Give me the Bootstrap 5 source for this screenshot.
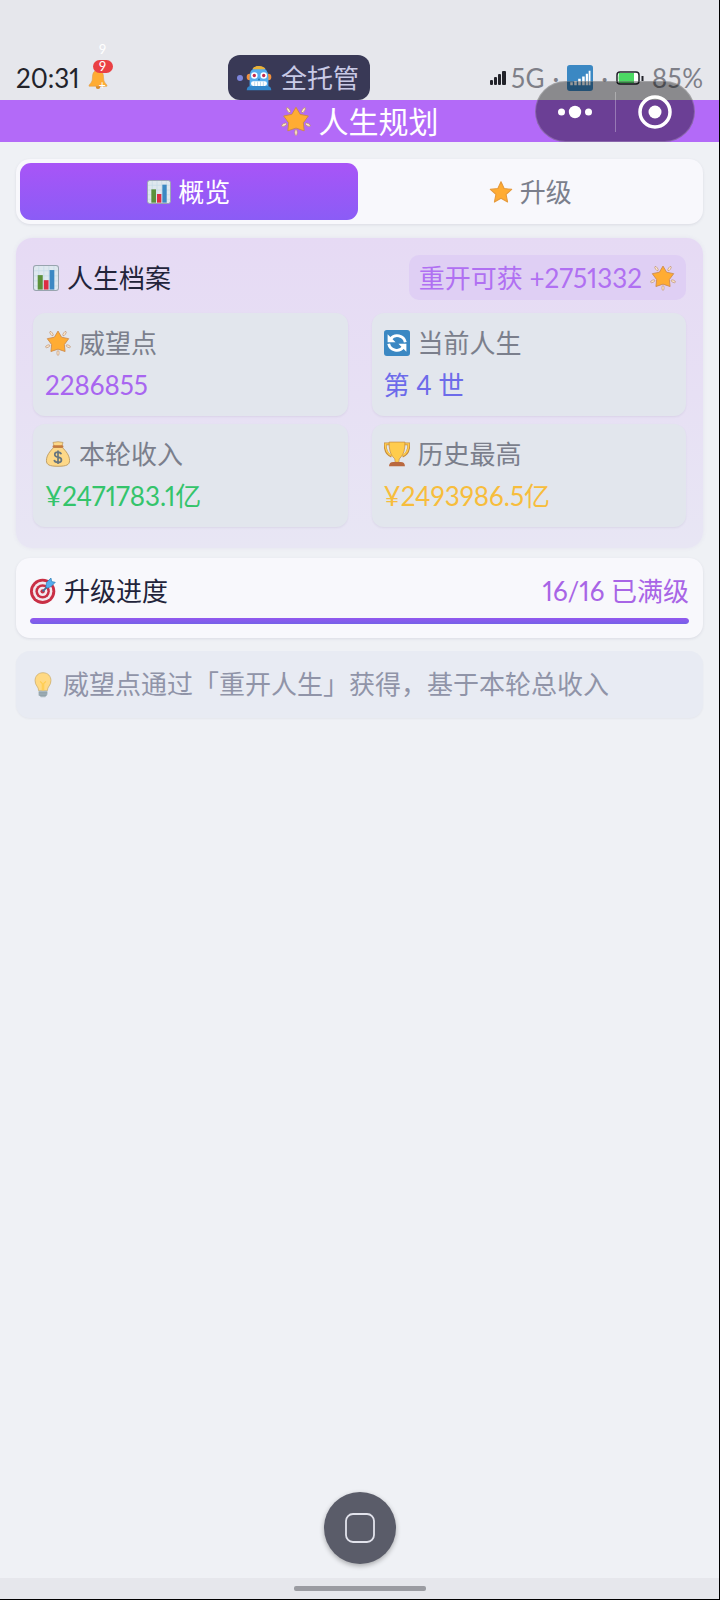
<!DOCTYPE html>
<html lang="zh-CN">
<head>
<meta charset="utf-8">
<meta name="viewport" content="width=device-width, initial-scale=1">
<title>人生规划</title>
<link href="https://cdn.jsdelivr.net/npm/bootstrap@5.3.0/dist/css/bootstrap.min.css" rel="stylesheet">
<style>
:root{--violet:#a855f7;--ink:#22243a;--muted:#7b7f8c}
body{font-family:Lato,"Noto Sans CJK SC",sans-serif;font-size:26px;line-height:38px;color:var(--ink);background:#eff1f5}
.screen{border-right:1px solid #000;border-bottom:1px solid #000}
.emo{width:26px;height:26px;flex:none;display:block}
.emo-sm{width:24px;height:24px}
.emo-lg{width:30px;height:30px}
.status{background:#e6e7ec;padding:55px 16px 0;height:100px}
.clock{color:#22232a}
.figures{font-variant-numeric:proportional-nums}
.bell{position:relative;width:20px;height:26px}
.bell svg{display:block;width:20px;height:20px;margin-top:4px}
.bell-count,.bell-ghost{position:absolute;left:5px;width:20px;height:13px;border-radius:7px;color:#fff;font-size:13px;line-height:13px;text-align:center}
.bell-count{background:#ea4044;top:-5px}
.bell-ghost{top:-22px}
.bell-plus{position:absolute;left:11px;top:14px;font-size:12px;line-height:12px;color:#fff}
.auto-pill{background:#393956;color:#c9cae6;border-radius:12px;height:45px;padding:0 11px 0 9px;gap:3px;border:0}
.auto-pill .tick{width:6px;height:6px;border-radius:50%;background:#7d86dd}
.auto-pill .emo{margin-right:6px}
.signals{color:#7e7f88}
.titlebar{background:#b36af8;color:#fff;height:42px;font-size:30px;line-height:42px}
.capsule{position:absolute;right:24px;top:81px;width:160px;height:61px;border-radius:31px;background:rgba(0,0,0,.4);border:1px solid rgba(255,255,255,.2)}
.capsule button{background:none;border:0;padding:0;flex:1}
.capsule svg{display:block;margin:0 auto}
.capsule .rule{width:1px;height:40px;background:rgba(255,255,255,.3)}
main{padding:17px 16px 0}
.tabs{background:#f8f8fc;border-radius:14px;padding:4px;gap:4px;height:65px;box-shadow:0 1px 3px rgba(40,40,80,.1)}
.tabs button{border:0;background:none;border-radius:11px;color:var(--muted);gap:7px}
.tabs button.active{background:linear-gradient(#a855f7,#8b5cf6);color:#fff}
.profile{margin-top:14px;border-radius:16px;padding:17px 17px 21px;background:linear-gradient(#e6daf4,#e8e6f4);box-shadow:0 0 4px rgba(120,90,180,.08)}
.profile h2,.progress-card h2{font-size:26px;line-height:38px;font-weight:400}
.gain{background:#dfcff4;color:#b070f2;border-radius:10px;height:45px;padding:0 10px;gap:8px}
.stats{display:grid;grid-template-columns:1fr 1fr;gap:8px 24px;margin-top:13px}
.stat{background:#e2e6ed;border-radius:12px;padding:9px 12px 10px;line-height:42px;box-shadow:0 1px 2px rgba(60,50,100,.08)}
.stat dt{font-weight:400;color:var(--muted)}
.progress-card{background:#f8f8fc;border-radius:14px;margin-top:10px;padding:14px;box-shadow:0 1px 3px rgba(40,40,80,.1)}
.meter{height:6px;border-radius:3px;margin-top:8px;background:#e2e6ed}
.meter .progress-bar{background:linear-gradient(#9358ef,#7561e8);border-radius:3px}
.points{color:#a865f0}
.life{color:#6d6bea}
.income{color:#34c46b}
.record{color:#f7bd3c}
.level{color:#a865e6}
.tip{background:#e8ebf3;color:#9094a8;border-radius:14px;margin-top:13px;padding:14px;line-height:39px;gap:7px;box-shadow:0 1px 2px rgba(40,40,80,.05)}
.home{width:72px;height:72px;border-radius:50%;border:0;background:#5a5c69;box-shadow:0 2px 5px rgba(0,0,0,.3);margin-bottom:14px}
.navstrip{background:#e6e7ec;height:21px}
.navstrip span{width:132px;height:5px;border-radius:2px;background:#9b9ca2}
</style>
</head>
<body>
<svg width="0" height="0" class="position-absolute" aria-hidden="true">
<defs>
<symbol id="star" viewBox="0 0 36 36"><path d="M18 2.5l4.700 10.300 11.300 1.300-8.400 7.600 2.300 11.400L18 27.400l-9.900 5.700 2.300-11.400L2 14.100l11.300-1.300z" fill="#ffac33" stroke="#e59a3c" stroke-width="1.600" stroke-linejoin="round"/></symbol>
<symbol id="glow" viewBox="0 0 36 36">
<g fill="#ffe9cc" stroke="#b98a68" stroke-width=".8"><ellipse cx="9" cy="5" rx="1.500" ry="3.500" transform="rotate(-35 9 5)"/><ellipse cx="27" cy="5" rx="1.500" ry="3.500" transform="rotate(35 27 5)"/><ellipse cx="3.800" cy="22.500" rx="1.500" ry="3.200" transform="rotate(65 3.800 22.500)"/><ellipse cx="32.200" cy="22.500" rx="1.500" ry="3.200" transform="rotate(-65 32.200 22.500)"/><ellipse cx="18" cy="31.800" rx="1.500" ry="3.500"/></g>
<path d="M18 1.500l5 8.500 9.800 2-6 8.200 1 9.600-9.800-3.300-9.800 3.300 1-9.600-6-8.200 9.800-2z" fill="#ffac33" stroke="#cc8a4c" stroke-width="1.200" stroke-linejoin="round"/></symbol>
<symbol id="chart" viewBox="0 0 36 36"><rect x=".7" y=".7" width="34.600" height="34.600" rx="3.500" fill="#dfe8ef" stroke="#98a4ae" stroke-width="1.400"/><path d="M1.500 8h33M1.500 15h33M1.500 22h33M1.500 29h33M8 1.500v33M15 1.500v33M22 1.500v33M29 1.500v33" stroke="#c5dbe7" stroke-width="1"/><path fill="#5c913b" d="M6.500 14h7v20h-7z"/><path fill="#dd2e44" d="M15 21h6.500v13H15z"/><path fill="#3b88c3" d="M23 7h6.500v27H23z"/></symbol>
<symbol id="robot" viewBox="0 0 36 36"><path d="M10 4Q18-1 26 4v4H10z" fill="#e8b13a"/><rect x="1" y="12" width="34" height="9" rx="4" fill="#f4903b"/><path d="M5 17Q5 3 18 3t13 14v13H5z" fill="#55acee"/><path d="M9 5Q18-2 27 5l-2 1H11z" fill="#e8b13a"/><path d="M1 35q0-6 6-6h22q6 0 6 6z" fill="#3288cc"/><circle cx="11.500" cy="14.500" r="4.500" fill="#fff"/><circle cx="24.500" cy="14.500" r="4.500" fill="#fff"/><circle cx="11.500" cy="14.500" r="2.300" fill="#c52a4d"/><circle cx="24.500" cy="14.500" r="2.300" fill="#c52a4d"/><path d="M16.500 21l1.500-3 1.500 3z" fill="#226699"/><rect x="7" y="22.500" width="22" height="6.500" rx="3" fill="#fff"/><path d="M12 23v6M16 23v6M20 23v6M24 23v6" stroke="#a9cbe4"/></symbol>
<symbol id="cycle" viewBox="0 0 36 36"><rect width="36" height="36" rx="4" fill="#3b88c3"/><path d="M9 12.500A11.500 11.500 0 0 1 29.500 17M27 23.500A11.500 11.500 0 0 1 6.500 19" fill="none" stroke="#fff" stroke-width="4"/><path d="M5 6v11h11zM31 30V19H20z" fill="#fff"/></symbol>
<symbol id="bag" viewBox="0 0 36 36"><path d="M12 9C7 14 2 20 2 27c0 6 4 8 16 8s16-2 16-8c0-7-5-13-10-18z" fill="#fdd888" stroke="#b9975c" stroke-width="1.200"/><path d="M11 2q7-2 14 0l-2 6H13z" fill="#fdd888" stroke="#b9975c"/><rect x="10.500" y="6" width="15" height="3.500" rx="1.700" fill="#c57a3e"/><path d="M22.500 18.500q-1-3-4.500-3-4.500 0-4.500 3.200c0 2.800 2 3.200 4.500 3.700s4.800 1.200 4.800 3.800c0 2.300-1.800 3.500-4.800 3.500-3.500 0-5-1.700-5.200-3.500M18 13v19" fill="none" stroke="#67757f" stroke-width="2.300"/></symbol>
<symbol id="cup" viewBox="0 0 36 36"><path d="M9 4H1.500q0 14 9 17M27 4h7.500q0 14-9 17" fill="none" stroke="#c58d42" stroke-width="4"/><path d="M9 4H1.800q0 13 9 16M27 4h7.200q0 13-9 16" fill="none" stroke="#ffcc4d" stroke-width="2"/><path d="M7 1.500h22q0 15-5 20-4 3-3.500 8h-5Q16 24 12 21.500 7 16 7 1.500z" fill="#ffcc4d" stroke="#c58d42"/><path d="M7 35q0-6 6-6h10q6 0 6 6z" fill="#b9683f"/></symbol>
<symbol id="target" viewBox="0 0 36 36"><circle cx="17.500" cy="18.500" r="17.500" fill="#c92f45"/><circle cx="17.500" cy="18.500" r="13.500" fill="#f3e9ee"/><circle cx="17.500" cy="18.500" r="10" fill="#c92f45"/><circle cx="17.500" cy="18.500" r="6.500" fill="#f3e9ee"/><circle cx="17.500" cy="18.500" r="3" fill="#c92f45"/><path d="M17.500 18.500L28 8" stroke="#3b6f99" stroke-width="2.500"/><path d="M22 12l1-6 6-6 1 5 5 1-6 6-5 2z" fill="#55acee" stroke="#3182b7"/></symbol>
<symbol id="bulb" viewBox="0 0 36 36"><path d="M18 1C11 1 7 6 7 12c0 7 5 8 5 14h12c0-6 5-7 5-14 0-6-4-11-11-11z" fill="#ffd983" stroke="#c8aa68"/><path d="M14 13l3 3v10M22 13l-3 3v10" fill="none" stroke="#ffcc4d" stroke-width="1.500"/><path d="M12 26h12v5l-3 4h-6l-3-4z" fill="#a9b7bf"/><path d="M12 29h12M12 32h11" stroke="#758991"/></symbol>
<symbol id="bellicon" viewBox="0 0 36 36"><circle cx="18" cy="32" r="4" fill="#d98b2b"/><path d="M18 2C10 2 8 9 8 16S5 25 2 29v2h32v-2c-3-4-6-6-6-13S26 2 18 2z" fill="#ffac33" stroke="#dc9a45"/></symbol>
<symbol id="bars" viewBox="0 0 36 36"><rect width="36" height="36" rx="4" fill="#3b88c3"/><path d="M4.500 24h3.500v4H4.500zM10 22h3.500v6H10zM15.500 19h3.500v9h-3.500zM21 16h3.500v12H21zM26 12h3v16h-3zM30 8h2.500v20H30z" fill="#fff"/></symbol>
</defs>
</svg>

<div class="screen d-flex flex-column min-vh-100">
  <header class="position-relative">
    <div class="status d-flex justify-content-between align-items-center">
      <div class="d-flex align-items-center gap-2">
        <span class="clock figures">20:31</span>
        <span class="bell"><svg aria-hidden="true"><use href="#bellicon"/></svg><span class="bell-ghost">9</span><span class="bell-count">9</span><span class="bell-plus">+</span></span>
      </div>
      <button type="button" class="auto-pill d-flex align-items-center"><span class="tick"></span><svg class="emo" aria-hidden="true"><use href="#robot"/></svg>全托管</button>
      <div class="signals d-flex align-items-center">
        <svg width="16" height="14" class="me-1" viewBox="0 0 16 14" fill="#22232a" aria-hidden="true"><rect y="9" width="3" height="5" rx="1"/><rect x="4" y="6" width="3" height="8" rx="1"/><rect x="8" y="3" width="3" height="11" rx="1"/><rect x="12" width="4" height="14" rx="1"/></svg>
        <span>5G</span><span class="px-2">·</span>
        <svg class="emo" aria-hidden="true"><use href="#bars"/></svg><span class="px-2">·</span>
        <svg width="28" height="14" class="me-2" viewBox="0 0 28 14" aria-hidden="true"><rect x="1" y="1" width="22" height="12" rx="3" fill="#fff" stroke="#22232a" stroke-width="1.500"/><path d="M3 2h15v10H3q-1-5 0-10z" fill="#4cd964"/><path d="M26.500 5v5" stroke="#22232a" stroke-width="2"/></svg>
        <span>85%</span>
      </div>
    </div>
    <h1 class="titlebar d-flex justify-content-center align-items-center m-0 fw-normal gap-2"><svg class="emo emo-lg" aria-hidden="true"><use href="#glow"/></svg>人生规划</h1>
    <div class="capsule d-flex align-items-center">
      <button type="button" aria-label="更多"><svg width="36" height="14" viewBox="0 0 36 14" fill="#fff"><circle cx="4.500" cy="7" r="3.500"/><circle cx="18" cy="7" r="6.200"/><circle cx="31.500" cy="7" r="3.500"/></svg></button>
      <span class="rule"></span>
      <button type="button" aria-label="关闭"><svg width="34" height="34" viewBox="0 0 34 34"><circle cx="17" cy="17" r="15" fill="none" stroke="#fff" stroke-width="3.500"/><circle cx="17" cy="17" r="6.500" fill="#fff"/></svg></button>
    </div>
  </header>

  <main>
    <div class="tabs d-flex" role="tablist">
      <button type="button" role="tab" aria-selected="true" class="active flex-fill w-50 d-flex justify-content-center align-items-center"><svg class="emo emo-sm" aria-hidden="true"><use href="#chart"/></svg>概览</button>
      <button type="button" role="tab" aria-selected="false" class="flex-fill w-50 d-flex justify-content-center align-items-center"><svg class="emo emo-sm" aria-hidden="true"><use href="#star"/></svg>升级</button>
    </div>

    <section class="profile">
      <div class="d-flex justify-content-between align-items-center">
        <h2 class="d-flex align-items-center gap-2 m-0"><svg class="emo" aria-hidden="true"><use href="#chart"/></svg>人生档案</h2>
        <span class="gain figures d-flex align-items-center">重开可获 +2751332<svg class="emo" aria-hidden="true"><use href="#glow"/></svg></span>
      </div>
      <dl class="stats figures mb-0">
        <div class="stat"><dt class="d-flex align-items-center gap-2"><svg class="emo" aria-hidden="true"><use href="#glow"/></svg>威望点</dt><dd class="m-0 points">2286855</dd></div>
        <div class="stat"><dt class="d-flex align-items-center gap-2"><svg class="emo" aria-hidden="true"><use href="#cycle"/></svg>当前人生</dt><dd class="m-0 life">第 4 世</dd></div>
        <div class="stat"><dt class="d-flex align-items-center gap-2"><svg class="emo" aria-hidden="true"><use href="#bag"/></svg>本轮收入</dt><dd class="m-0 income">¥2471783.1亿</dd></div>
        <div class="stat"><dt class="d-flex align-items-center gap-2"><svg class="emo" aria-hidden="true"><use href="#cup"/></svg>历史最高</dt><dd class="m-0 record">¥2493986.5亿</dd></div>
      </dl>
    </section>

    <section class="progress-card">
      <div class="d-flex justify-content-between">
        <h2 class="d-flex align-items-center gap-2 m-0"><svg class="emo" aria-hidden="true"><use href="#target"/></svg>升级进度</h2>
        <span class="level figures">16/16 已满级</span>
      </div>
      <div class="progress meter" role="progressbar" aria-label="升级进度" aria-valuenow="16" aria-valuemin="0" aria-valuemax="16"><div class="progress-bar" style="width:100%"></div></div>
    </section>

    <p class="tip d-flex align-items-center mb-0"><svg class="emo" aria-hidden="true"><use href="#bulb"/></svg>威望点通过「重开人生」获得，基于本轮总收入</p>
  </main>

  <footer class="mt-auto d-flex flex-column align-items-center">
    <button type="button" class="home d-flex justify-content-center align-items-center p-0" aria-label="主页"><svg width="30" height="30" viewBox="0 0 30 30"><rect x="1" y="1" width="28" height="28" rx="7" fill="none" stroke="#e2e3ec" stroke-width="1.800"/></svg></button>
    <div class="navstrip w-100 d-flex justify-content-center align-items-center"><span></span></div>
  </footer>
</div>
<script src="https://cdn.jsdelivr.net/npm/bootstrap@5.3.0/dist/js/bootstrap.bundle.min.js"></script>
</body>
</html>
